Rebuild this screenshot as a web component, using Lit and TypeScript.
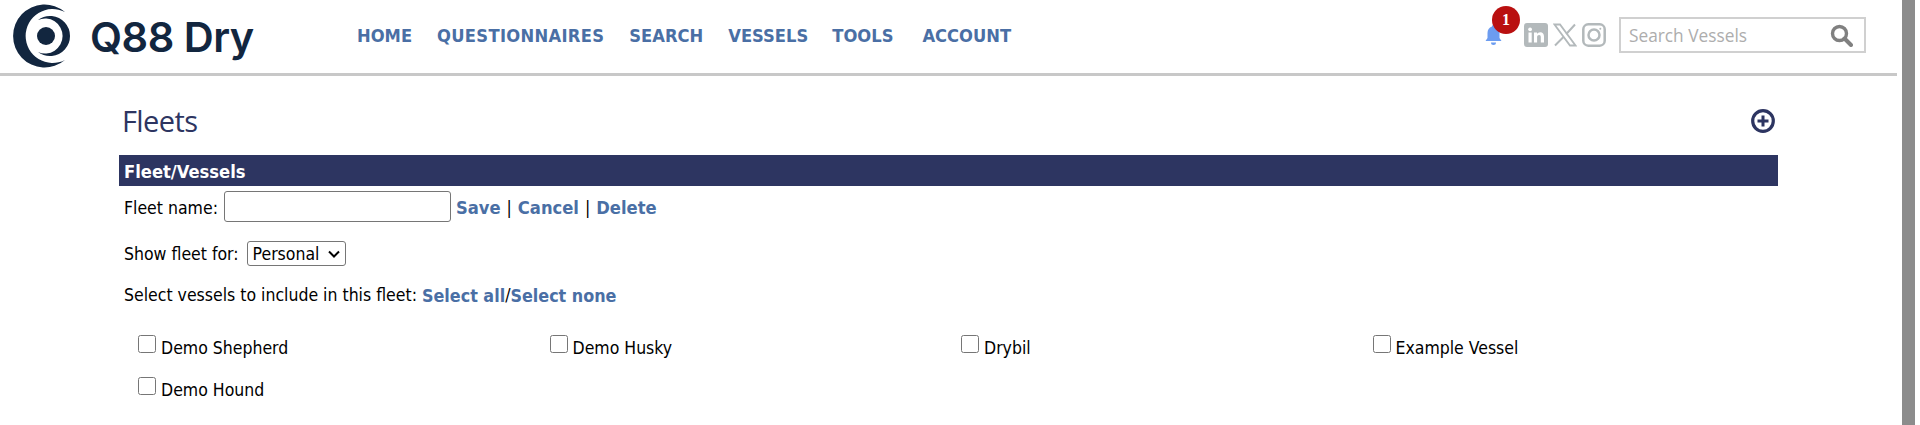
import { LitElement, html, css } from "lit";
import { customElement } from "lit/decorators.js";

@customElement("app-root")
export class AppRoot extends LitElement {
  static styles = css`
    :host { display: block; width: 1920px; height: 425px; overflow: hidden; background: #fff;
      font-family: "DejaVu Sans", sans-serif; font-stretch: condensed; font-size: 17.5px; color: #000; }
    .page { display: flex; height: 425px; }
    .main { width: 1897px; flex: none; }
    .scrollbar { width: 13px; margin-left: 5px; background: #8c8c8c; flex: none; }
    header { height: 73px; border-bottom: 3px solid #c8c8c8; display: flex; align-items: center; position: relative; }
    .logo { display: flex; align-items: center; width: 357px; flex: none; height: 73px; }
    .logo svg { flex: none; }
    .brand { font-family: Inter, sans-serif; font-stretch: normal; font-weight: 600; font-size: 41.5px; color: #12263f; margin-left: 12px; letter-spacing: -0.5px; }
    nav { display: flex; gap: 25px; margin-bottom: 2px; }
    nav a { font-weight: 700; font-size: 18.2px; color: #4a6fa5; white-space: nowrap; }
    nav a.wide { letter-spacing: 0.3px; }
    nav a.tools { margin-left: -1px; }
    nav a.acct { margin-left: 4px; }
    .right { margin-left: auto; display: flex; align-items: center; margin-right: 31px; margin-bottom: 3px; }
    .bell { position: relative; width: 39px; height: 24px; display: flex; margin-top: 2px; }
    .badge { position: absolute; left: 7px; top: -18px; width: 28px; height: 28px; border-radius: 50%; background: #b91010; color: #fff;
      font-family: "Liberation Serif", serif; font-weight: 700; font-size: 16px; display: flex; align-items: center; justify-content: center; }
    .soc { display: flex; gap: 5px; margin-right: 13px; }
    .search { width: 247px; height: 36px; box-sizing: border-box; border: 2px solid #d0d0d0; display: flex; align-items: center; padding: 0 11px 0 8px; justify-content: space-between; }
    .search span { font-family: "Open Sans", sans-serif; font-stretch: normal; font-size: 17.3px; color: #adadad; }
    .content { margin: 0 119px 0 119px; }
    .title { display: flex; justify-content: space-between; align-items: center; height: 79px; padding: 10px 3px 0 3px; box-sizing: border-box; }
    .title h1 { margin: 0; font-family: "Open Sans", sans-serif; font-stretch: normal; font-weight: 400; font-size: 29px; color: #2d3561; letter-spacing: -0.6px; }
    .bar { height: 31px; background: #2d3561; color: #fff; font-weight: 700; font-size: 18.2px; line-height: 33px; padding-left: 5px; }
    .form { padding-left: 5px; }
    .row { display: flex; align-items: center; white-space: pre; box-sizing: border-box; }
    .r1 { margin-top: 5px; height: 31px; padding-top: 2px; }
    .r2 { margin-top: 19px; height: 25px; }
    .r3 { margin-top: 16px; height: 24px; padding-top: 2px; }
    .r1 input { width: 227px; height: 31px; box-sizing: border-box; margin: -2px 5px 0 6px; border: 1px solid #767676; border-radius: 3px; }
    .r2 select { appearance: none; height: 25px; width: 99px; box-sizing: border-box; margin-left: 8px; padding: 0 0 0 5px; font: inherit; font-stretch: condensed; color: #000;
      border: 1px solid #767676; border-radius: 3px;
      background: #fff url("data:image/svg+xml,%3Csvg xmlns='http://www.w3.org/2000/svg' width='14' height='10'%3E%3Cpath d='M2 2.500l5 5 5-5' fill='none' stroke='%23000' stroke-width='2'/%3E%3C/svg%3E") no-repeat right 4px center; }
    .sep { margin: 0 1px; }
    a.l { color: #4a6fa5; font-weight: 700; font-size: 18.2px; }
    .r3 a.l { font-size: 17.8px; }
    .grid { display: grid; grid-template-columns: repeat(4, 411.5px); padding-left: 19px; margin-top: 28px; row-gap: 17px; }
    .cell { display: flex; align-items: flex-start; height: 25px; }
    .cell input { width: 18px; height: 18px; margin: 1px 5px 0 0; flex: none; }
    .cell span { margin-top: 4px; }
  `;

  render() {
    const vessels = ["Demo Shepherd", "Demo Husky", "Drybil", "Example Vessel", "Demo Hound"];
    return html`<div class="page">
      <div class="main">
        <header>
          <div class="logo">
            <svg width="78" height="73" viewBox="0 0 78 73" fill="#12263f">
              <path d="M65 12 A31.5 31.5 0 1 0 65 60 A27 27 0 1 1 65 12 Z"></path>
              <path d="M38 20 A20 20 0 1 1 38 52 A17.5 17.5 0 1 0 38 20 Z"></path>
              <circle cx="46" cy="36" r="9"></circle>
            </svg>
            <span class="brand">Q88 Dry</span>
          </div>
          <nav>
            <a>HOME</a><a class="wide">QUESTIONNAIRES</a><a>SEARCH</a><a>VESSELS</a><a class="tools">TOOLS</a><a class="acct">ACCOUNT</a>
          </nav>
          <div class="right">
            <div class="bell">
              <svg width="17" height="22" viewBox="0 0 16 22" fill="#6c9cf0"><path d="M8 1c1 0 1.500.7 1.500 1.500C12.500 3.500 14 6 14 9v5l2 3H0l2-3V9c0-3 1.500-5.500 4.500-6.500C6.500 1.700 7 1 8 1zM5.500 18.500h5a2.500 2.500 0 0 1-5 0z"></path></svg>
              <div class="badge">1</div>
            </div>
            <div class="soc">
              <svg width="24" height="24" viewBox="0 0 24 24"><rect width="24" height="24" rx="3" fill="#b3b9bb"></rect><rect x="4.500" y="9.500" width="3.200" height="10" fill="#fff"></rect><circle cx="6.100" cy="6.300" r="1.900" fill="#fff"></circle><path d="M10 9.500h3v1.500c.7-1.100 1.800-1.800 3.200-1.800 2.600 0 3.800 1.600 3.800 4.400v5.900h-3.200v-5.300c0-1.500-.5-2.300-1.700-2.300s-2 .9-2 2.300v5.300H10z" fill="#fff"></path></svg>
              <svg width="24" height="24" viewBox="0 0 24 24" fill="none" stroke="#b3b9bb"><path d="M1.500 1.500h5.500l15.500 21h-5.500z" stroke-width="1.800"></path><path d="M22 1.500 13.300 11M10.700 13.800 2 22.500" stroke-width="2"></path></svg>
              <svg width="24" height="24" viewBox="0 0 24 24" fill="none" stroke="#b3b9bb" stroke-width="2.500"><rect x="1.300" y="1.300" width="21.400" height="21.400" rx="5"></rect><circle cx="12" cy="12" r="5.500"></circle><circle cx="18.300" cy="5.700" r="1" fill="#b3b9bb" stroke="none"></circle></svg>
            </div>
            <div class="search"><span>Search Vessels</span>
              <svg width="23" height="23" viewBox="0 0 23 23" fill="none" stroke="#808080"><circle cx="9.500" cy="9.500" r="7" stroke-width="3.400"></circle><path d="M14.500 14.500 21 21" stroke-width="4" stroke-linecap="round"></path></svg>
            </div>
          </div>
        </header>
        <div class="content">
          <div class="title"><h1>Fleets</h1>
            <svg width="24" height="24" viewBox="0 0 24 24" fill="none" stroke="#2d3561"><circle cx="12" cy="12" r="10.300" stroke-width="3.200"></circle><path d="M12 6.500v11M6.500 12h11" stroke-width="3"></path></svg>
          </div>
          <div class="bar">Fleet/Vessels</div>
          <div class="form">
            <div class="row r1">Fleet name:<input type="text" /><a class="l">Save</a><span class="sep"> | </span><a class="l">Cancel</a><span class="sep"> | </span><a class="l">Delete</a></div>
            <div class="row r2">Show fleet for:<select><option>Personal</option></select></div>
            <div class="row r3">Select vessels to include in this fleet: <a class="l">Select all</a>/<a class="l">Select none</a></div>
          </div>
          <div class="grid">
            ${vessels.map((v) => html`<label class="cell"><input type="checkbox" /><span>${v}</span></label>`)}
          </div>
        </div>
      </div>
      <div class="scrollbar"></div>
    </div>`;
  }
}
